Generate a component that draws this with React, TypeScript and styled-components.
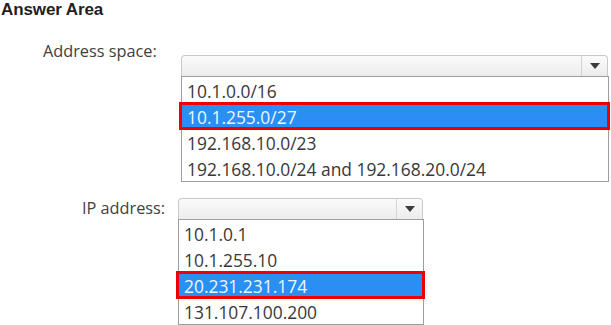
import React from 'react'
import styled, { createGlobalStyle } from 'styled-components'

const GlobalStyle = createGlobalStyle`
  html, body {
    margin: 0;
    padding: 0;
    background: #ffffff;
  }
  body {
    font-family: 'Open Sans', 'Noto Sans', 'Liberation Sans', sans-serif;
    color: #3a3a3a;
  }
`

const Page = styled.div`
  width: 611px;
  height: 325px;
  padding-left: 1px;
  box-sizing: border-box;
  overflow: hidden;
`

const Title = styled.h2`
  margin: 0;
  font-family: 'Liberation Sans', Arial, sans-serif;
  font-size: 17px;
  line-height: 20px;
  font-weight: 700;
  color: #1f1f1f;
  letter-spacing: -0.1px;
`

const Section = styled.div<{ $mt: number }>`
  display: flex;
  align-items: flex-start;
  margin-top: ${(p) => p.$mt}px;
`

const Label = styled.div<{ $left: number; $width: number }>`
  margin-left: ${(p) => p.$left}px;
  width: ${(p) => p.$width}px;
  flex-shrink: 0;
  font-size: 16.3px;
  line-height: 20px;
  color: #404040;
`

const Dropdown = styled.div<{ $width: number; $top: number }>`
  width: ${(p) => p.$width}px;
  margin-top: ${(p) => p.$top}px;
  display: flex;
  flex-direction: column;
`

const Header = styled.div`
  height: 21px;
  box-sizing: border-box;
  display: flex;
  border: 1px solid #c9c9c9;
  border-bottom: none;
  border-radius: 4px 4px 0 0;
  background: linear-gradient(#fbfbfb, #ececec);
  margin-right: 1px;
`

const Field = styled.div`
  flex: 1;
`

const ArrowBox = styled.div`
  width: 25px;
  border-left: 1px solid #d4d4d4;
  display: flex;
  align-items: center;
  justify-content: center;
`

const Arrow = styled.div`
  width: 0;
  height: 0;
  border-left: 5px solid transparent;
  border-right: 5px solid transparent;
  border-top: 6px solid #3c3c3c;
`

const List = styled.div`
  border: 1px solid #9d9d9d;
  background: #ffffff;
`

const Option = styled.div<{ $selected?: boolean }>`
  position: relative;
  height: 26px;
  line-height: 28px;
  padding-left: 5px;
  font-size: 17.4px;
  white-space: nowrap;
  color: ${(p) => (p.$selected ? '#eef7ff' : '#383838')};
  background: ${(p) => (p.$selected ? '#2a8ff2' : 'transparent')};

  ${(p) =>
    p.$selected &&
    `
    &::after {
      content: '';
      position: absolute;
      top: -1px;
      bottom: -1px;
      left: -3px;
      right: -2px;
      border: 3px solid #ee0000;
    }
  `}
`

type Select = {
  label: string
  labelLeft: number
  labelWidth: number
  width: number
  top: number
  mt: number
  options: string[]
  selected: number
}

const selects: Select[] = [
  {
    label: 'Address space:',
    labelLeft: 42,
    labelWidth: 138,
    width: 428,
    top: 14,
    mt: 21,
    options: ['10.1.0.0/16', '10.1.255.0/27', '192.168.10.0/23', '192.168.10.0/24 and 192.168.20.0/24'],
    selected: 1
  },
  {
    label: 'IP address:',
    labelLeft: 81,
    labelWidth: 96,
    width: 246,
    top: 0,
    mt: 16,
    options: ['10.1.0.1', '10.1.255.10', '20.231.231.174', '131.107.100.200'],
    selected: 2
  }
]

const App: React.FC = () => {
  return (
    <Page>
      <GlobalStyle />
      <Title>Answer Area</Title>
      {selects.map((s) => (
        <Section key={s.label} $mt={s.mt}>
          <Label $left={s.labelLeft} $width={s.labelWidth}>
            {s.label}
          </Label>
          <Dropdown $width={s.width} $top={s.top}>
            <Header>
              <Field />
              <ArrowBox>
                <Arrow />
              </ArrowBox>
            </Header>
            <List>
              {s.options.map((o, i) => (
                <Option key={o} $selected={i === s.selected}>
                  {o}
                </Option>
              ))}
            </List>
          </Dropdown>
        </Section>
      ))}
    </Page>
  )
}

export default App
